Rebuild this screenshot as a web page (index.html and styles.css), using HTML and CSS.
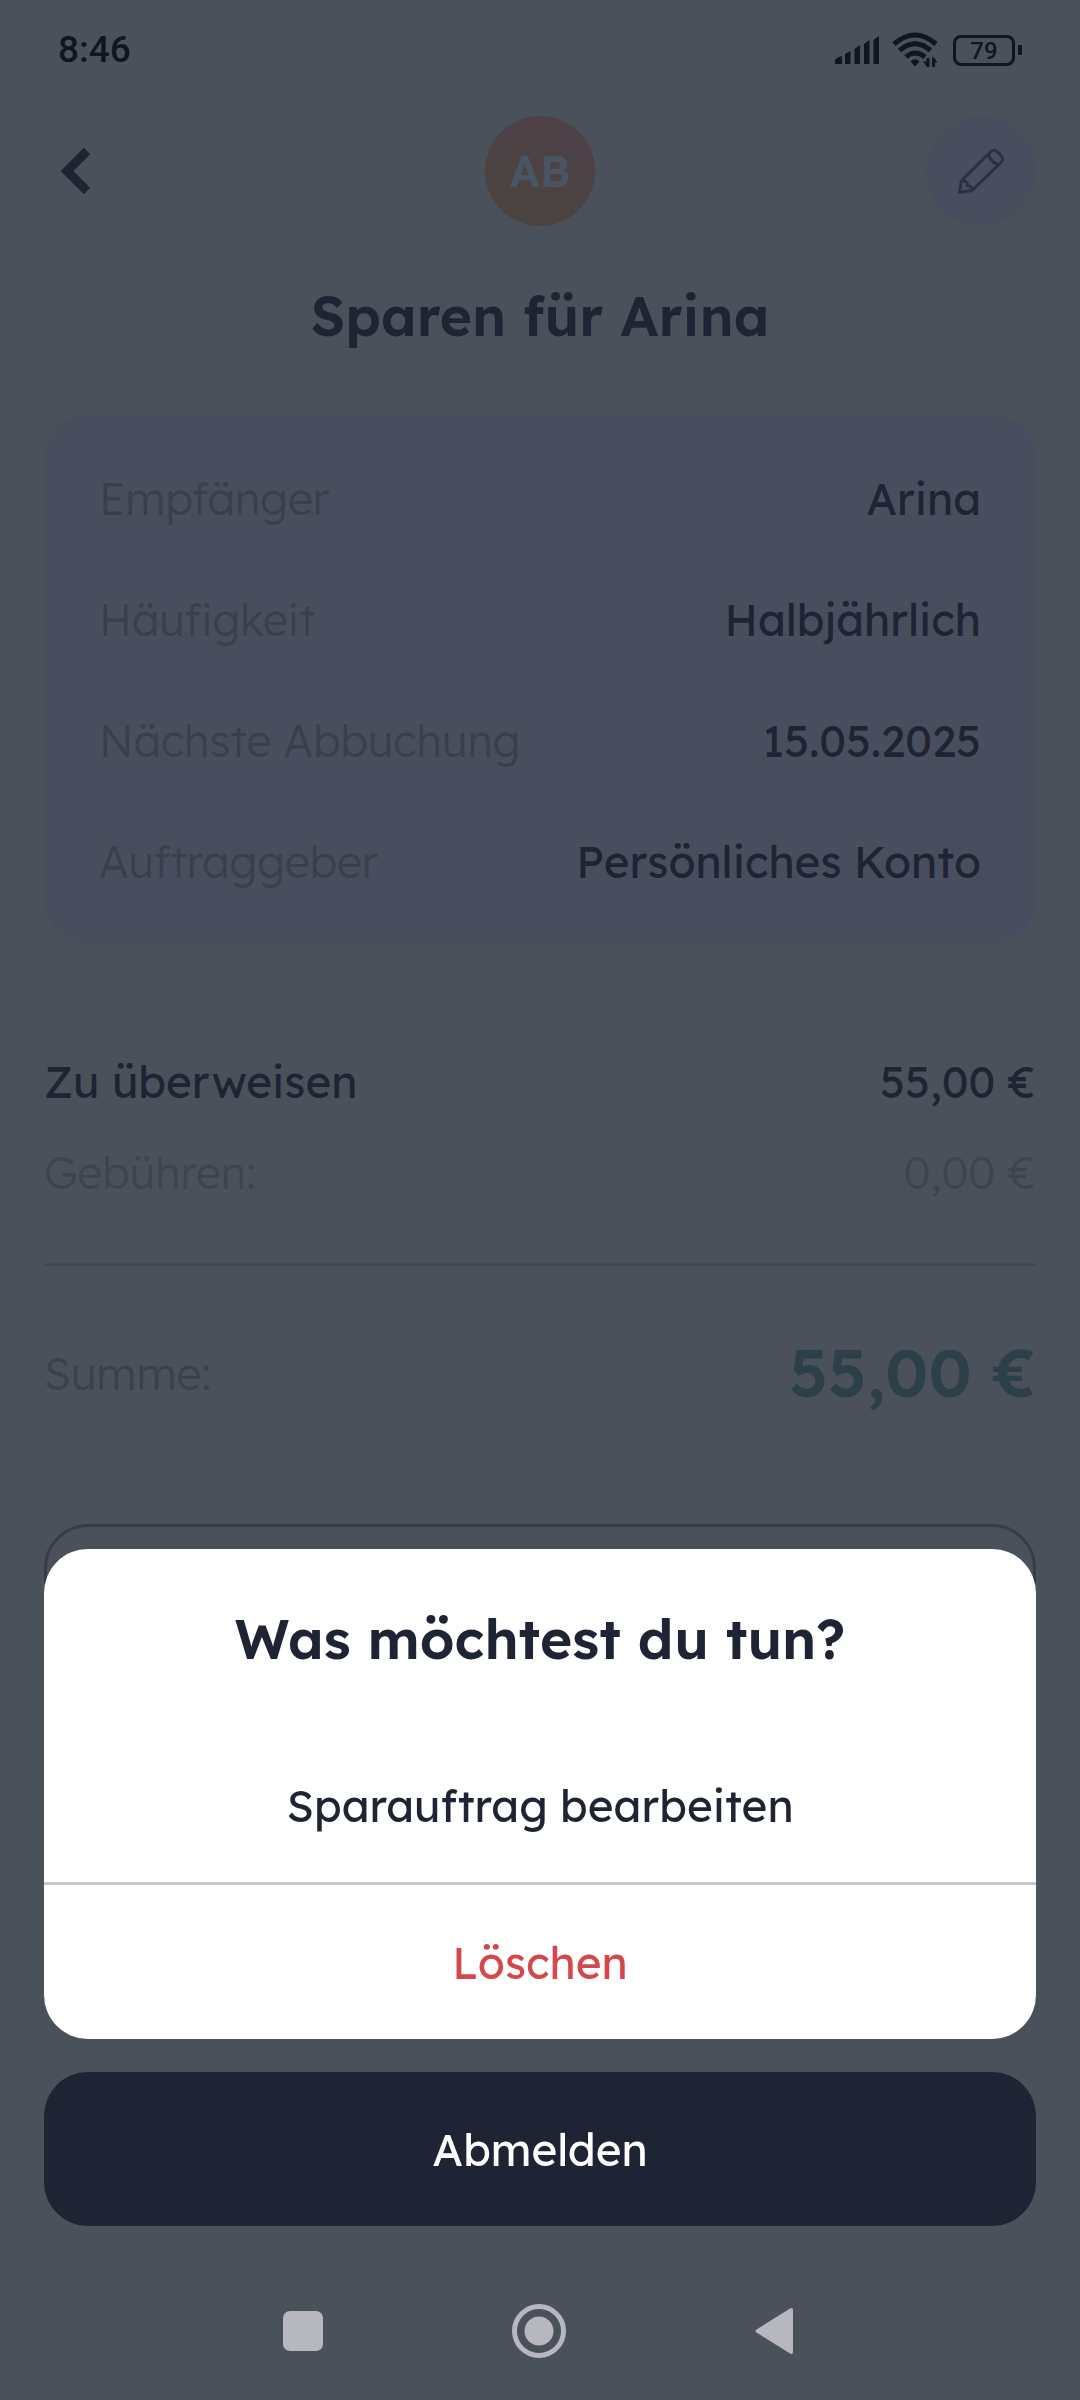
FILE: index.html
```html
<!DOCTYPE html>
<html lang="de">
<head>
<meta charset="utf-8">
<meta name="viewport" content="width=device-width, initial-scale=1">
<title>Sparen für Arina</title>
<link rel="stylesheet" href="styles.css">
</head>
<body>
<div class="screen">
  <div class="status-bar">
    <span class="clock">8:46</span>
    <div class="status-icons">
      <svg class="signal" width="45" height="30" viewBox="0 0 45 30" aria-hidden="true">
        <path d="M0 29v-4q2-3 7-4v8zM10 29V19l5.500-3v13zM19.500 29V14l5.500-4v19zM29 29V9l5.500-4v24zM38.500 29V5L44 1v28z"/>
      </svg>
      <svg class="wifi" width="46" height="36" viewBox="0 0 46 36" aria-hidden="true">
        <g fill="none" stroke-width="5">
          <path d="M2 12Q23-6 44 12"/>
          <path d="M7.500 18.500Q23 5 38.500 18.500"/>
          <path d="M14 25Q23 17 33 25"/>
        </g>
        <path d="M23 34.500l-4.500-5q4.500-4.500 9 0z"/>
        <path d="M37.500 26v9H35l-4-5.500h3.500V26zM40 35v-9.500h2l3.500 5H43V35z"/>
      </svg>
      <div class="battery"><span class="battery-body">79</span><span class="battery-cap"></span></div>
    </div>
  </div>

  <header class="header">
    <button class="icon-button back" aria-label="Zurück">
      <svg width="32" height="48" viewBox="0 0 32 48" aria-hidden="true"><path d="M28 4L8 24l20 20" fill="none" stroke-width="9"/></svg>
    </button>
    <div class="avatar">AB</div>
    <button class="icon-button edit" aria-label="Bearbeiten">
      <svg width="48" height="48" viewBox="0 0 48 48" aria-hidden="true">
        <path d="M2.500 45.500l2-12L34 4.500q3-3 6 0l4 4q3 4 0 7L15 43.500zM4.500 33.500q6 0 6 5 4.500 0 4.500 5M31 7.500q2 6 10 10.500" fill="none" stroke-width="3" stroke-linejoin="round"/>
      </svg>
    </button>
  </header>

  <main class="content">
    <h1 class="title">Sparen für Arina</h1>
    <dl class="card">
      <div class="row"><dt>Empfänger</dt><dd>Arina</dd></div>
      <div class="row"><dt>Häufigkeit</dt><dd>Halbjährlich</dd></div>
      <div class="row"><dt>Nächste Abbuchung</dt><dd>15.05.2025</dd></div>
      <div class="row"><dt>Auftraggeber</dt><dd>Persönliches Konto</dd></div>
    </dl>
    <dl class="amounts">
      <div class="row transfer"><dt>Zu überweisen</dt><dd>55,00 €</dd></div>
      <div class="row fees"><dt>Gebühren:</dt><dd>0,00 €</dd></div>
      <div class="row total"><dt>Summe:</dt><dd>55,00 €</dd></div>
    </dl>
    <div class="outline"></div>
  </main>
</div>

<div class="overlay">
  <div class="sheet" role="dialog" aria-modal="true" aria-labelledby="sheet-title">
    <div class="options">
      <h2 class="title" id="sheet-title">Was möchtest du tun?</h2>
      <button class="option">Sparauftrag bearbeiten</button>
      <button class="option delete">Löschen</button>
    </div>
    <button class="option logout">Abmelden</button>
  </div>
  <nav class="system-nav">
    <button aria-label="Übersicht"><svg width="56" height="56" viewBox="0 0 56 56" aria-hidden="true"><rect x="8" y="8" width="40" height="40" rx="7"/></svg></button>
    <button aria-label="Startbildschirm"><svg width="56" height="56" viewBox="0 0 56 56" aria-hidden="true"><circle cx="28" cy="28" r="24.500" fill="none" stroke="#b6b7bf" stroke-width="5"/><circle cx="28" cy="28" r="14.500"/></svg></button>
    <button aria-label="Zurück"><svg width="56" height="56" viewBox="0 0 56 56" aria-hidden="true"><path d="M9.500 26.500L43 5.500q3-1.500 3 1.500v42q0 3-3 1.500L9.500 29.500q-2-1.500 0-3z"/></svg></button>
  </nav>
</div>
</body>
</html>
```
FILE: styles.css
```css
* {
  box-sizing: border-box;
}

:root {
  --backdrop: #4b515b;
  --surface: #484e5d;
  --ink: #1e2433;
}

body {
  margin: 0;
  background: var(--backdrop);
  color: var(--ink);
  font: 400 44px/55px Lexend, Inter, "Open Sans", sans-serif;
}

h1, h2, dl, dd {
  margin: 0;
}

button {
  border: 0;
  padding: 0;
  background: none;
  color: inherit;
  font: inherit;
}

svg {
  display: block;
}

.screen {
  min-height: 100vh;
}

.status-bar {
  display: flex;
  align-items: center;
  justify-content: space-between;
  height: 100px;
  padding: 0 58px;
  color: #10151f;
  fill: #10151f;
  stroke: none;
}

.clock {
  font: 500 37px/44px Roboto, sans-serif;
}

.status-icons {
  display: flex;
  align-items: center;
  gap: 12px;
}

.wifi g {
  stroke: #10151f;
}

.battery {
  display: flex;
  align-items: center;
  gap: 3px;
  margin-left: 3px;
}

.battery-body {
  width: 62px;
  height: 31px;
  border: 3px solid #10151f;
  border-radius: 8px;
  font: 500 24px/26px Roboto, sans-serif;
  text-align: center;
}

.battery-cap {
  width: 4px;
  height: 10px;
  border-radius: 1px;
  background: #10151f;
}

.header {
  display: flex;
  align-items: center;
  justify-content: space-between;
  padding: 16px 44px 0;
}

.icon-button {
  display: flex;
  align-items: center;
  width: 110px;
  height: 110px;
  border-radius: 50%;
  stroke: var(--ink);
}

.back {
  padding-left: 15px;
}

.edit {
  justify-content: center;
  background: var(--surface);
  stroke: #2a3144;
}

.avatar {
  width: 110px;
  height: 110px;
  border-radius: 50%;
  background: linear-gradient(200deg, #4d4147 25%, #4a443f 90%);
  color: #4b5463;
  font-weight: 600;
  line-height: 110px;
  text-align: center;
}

.content {
  padding: 55px 44px 0;
}

.title {
  font-size: 55px;
  font-weight: 600;
  line-height: 70px;
  text-align: center;
}

.card {
  display: flex;
  flex-direction: column;
  gap: 66px;
  margin-top: 64px;
  padding: 56px 55px 54px;
  border-radius: 44px;
  background: var(--surface);
}

.row {
  display: flex;
  align-items: center;
  justify-content: space-between;
}

.card dt {
  color: #393f4d;
  font-weight: 300;
}

.amounts {
  margin-top: 111px;
}

.fees {
  margin-top: 36px;
  padding-bottom: 63px;
  border-bottom: 3px solid #434953;
  color: #3e444e;
  font-weight: 300;
}

.total {
  margin-top: 66px;
}

.total dt {
  color: #37424c;
  font-weight: 300;
}

.total dd {
  color: #2d404a;
  font-size: 66px;
  font-weight: 600;
  line-height: 82px;
}

.outline {
  height: 154px;
  margin-top: 110px;
  border: 3px solid #363c48;
  border-radius: 44px;
}

.overlay {
  position: fixed;
  inset: auto 0 0;
}

.sheet {
  display: flex;
  flex-direction: column;
  gap: 33px;
  padding: 0 44px;
}

.options {
  display: flex;
  flex-direction: column;
  padding-top: 55px;
  border-radius: 44px;
  background: #fff;
}

.option {
  height: 154px;
}

.options .title {
  margin-bottom: 54px;
}

.options .delete {
  height: 157px;
  border-top: 3px solid #c8c8ca;
  color: #d5474a;
}

.logout {
  border-radius: 44px;
  background: var(--ink);
  color: #fff;
}

.system-nav {
  display: flex;
  justify-content: center;
  gap: 180px;
  padding: 77px 2px 41px 0;
  fill: #b6b7bf;
}
```
